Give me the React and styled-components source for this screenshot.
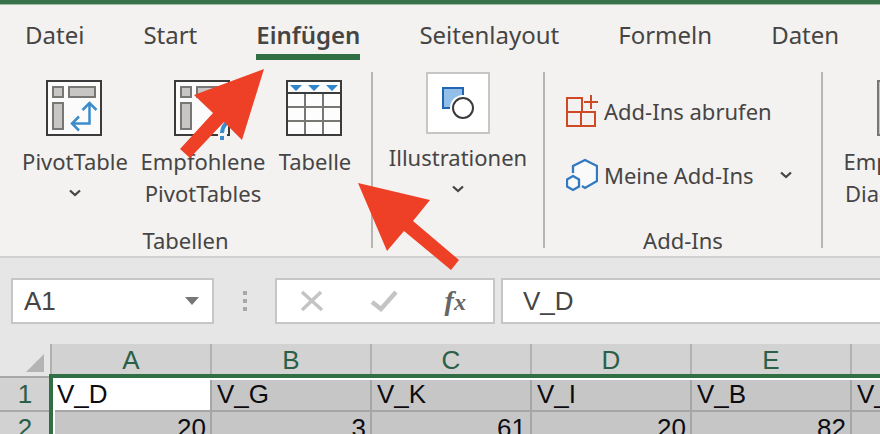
import React from 'react';
import styled, { createGlobalStyle, css } from 'styled-components';

const GlobalStyle = createGlobalStyle`
  * { box-sizing: border-box; }
  body { margin: 0; background: #e6e6e6; }
  button, input { font: inherit; color: inherit; }
`;

const Window = styled.div`
  position: relative;
  display: flex;
  flex-direction: column;
  height: 100vh;
  overflow: hidden;
  background: #e6e6e6;
  color: #464544;
  font-family: "Noto Sans", "Open Sans", sans-serif;
  font-size: 22px;
  line-height: 32px;
`;

const TitleStripe = styled.div`
  flex: none;
  height: 5px;
  background: #38724a;
  border-bottom: 1px solid #9dbba6;
`;

const RibbonArea = styled.header`
  flex: none;
  background: #f3f2f1;
  border-bottom: 2px solid #d2d0ce;
`;

const Tabs = styled.nav`
  display: flex;
  gap: 59px;
  padding: 11px 25px 0;
  font-size: 24px;
`;

const Tab = styled.button`
  flex: none;
  height: 44px;
  padding: 0;
  border: 0;
  border-bottom: 6px solid transparent;
  background: none;
  line-height: 36px;
  white-space: nowrap;
  ${(p) => p.$active && css`
    font-weight: 600;
    border-bottom-color: #2f6f43;
  `}
`;

const Ribbon = styled.div`
  display: flex;
  padding: 12px 0 8px;
`;

const Group = styled.section`
  flex: none;
  display: flex;
  flex-direction: column;
  justify-content: space-between;
  width: ${(p) => p.$width}px;
  height: 176px;
  border-right: 2px solid #b8b6b4;
`;

const GroupTitle = styled.h2`
  margin: 0;
  font-size: 22px;
  font-weight: 400;
  line-height: 16px;
  text-align: center;
`;

const Tools = styled.div`
  display: flex;
  padding: 8px 0 0 ${(p) => p.$inset || 0}px;
`;

const Tool = styled.button`
  flex: none;
  display: flex;
  flex-direction: column;
  align-items: center;
  width: ${(p) => p.$width}px;
  padding: 0;
  border: 0;
  background: none;
  white-space: nowrap;
  svg { flex: none; }
`;

const ToolText = styled.span`
  padding-top: 7px;
`;

const Frame = styled.span`
  display: flex;
  align-items: center;
  justify-content: center;
  width: 64px;
  height: 62px;
  border: 2px solid #c8c6c4;
  background: #fff;
`;

const IllustrationTools = styled(Tools)`
  padding-top: 0;
  justify-content: center;
`;

const AddInList = styled.div`
  display: flex;
  flex-direction: column;
  gap: 30px;
  padding: 22px 0 0 21px;
`;

const AddIn = styled.button`
  display: flex;
  align-items: center;
  gap: 6px;
  padding: 0;
  border: 0;
  background: none;
  white-space: nowrap;
  svg { flex: none; }
`;

const AddInName = styled.span`
  margin-right: 20px;
`;

const FormulaBar = styled.div`
  flex: none;
  display: flex;
  align-items: center;
  height: 86px;
  padding: 0 0 0 11px;
  font-family: "Liberation Sans", Arial, sans-serif;
  font-size: 26px;
`;

const Box = styled.div`
  flex: none;
  display: flex;
  align-items: center;
  height: 46px;
  border: 2px solid #c6c6c6;
  background: #fff;
`;

const NameBox = styled(Box)`
  width: 203px;
  padding: 0 13px 0 11px;
`;

const FormulaBox = styled(Box)`
  flex: 1;
  padding-left: 20px;
  border-right: 0;
`;

const Actions = styled(Box)`
  width: 220px;
  margin-right: 6px;
  padding-right: 4px;
  justify-content: space-around;
`;

const Field = styled.input`
  flex: 1;
  min-width: 0;
  padding: 0;
  border: 0;
  outline: 0;
  background: none;
`;

const IconButton = styled.button`
  display: flex;
  padding: 0;
  border: 0;
  background: none;
`;

const FxButton = styled(IconButton)`
  align-items: baseline;
  color: #666;
  font: italic bold 28px/32px "Liberation Serif", serif;
  small { font-size: 24px; }
`;

const Grip = styled.div`
  flex: none;
  display: flex;
  flex-direction: column;
  align-items: center;
  gap: 4px;
  width: 61px;
`;

const Dot = styled.span`
  width: 4px;
  height: 4px;
  background: #a8a8a8;
`;

const SheetArea = styled.main`
  position: relative;
  flex: 1;
  overflow: hidden;
  font-family: "Liberation Sans", Arial, sans-serif;
  font-size: 26px;
`;

const Sheet = styled.table`
  width: 1012px;
  table-layout: fixed;
  border-collapse: separate;
  border-spacing: 0;
  color: #0c0c10;
`;

const CornerColumn = styled.col`
  width: 52px;
`;

const heading = css`
  padding: 0;
  color: #2b6048;
  font-weight: 400;
  border-right: 2px solid #b1b1b1;
  border-bottom: 2px solid #a8a8a8;
  background: #d2d2d2;
`;

const ColumnHeading = styled.th`
  ${heading}
  height: 34px;
`;

const RowHeading = styled.th`
  ${heading}
  height: 34px;
`;

const Corner = styled.td`
  padding: 0 6px 4px 0;
  border-right: 2px solid #b1b1b1;
  border-bottom: 2px solid #a8a8a8;
  vertical-align: bottom;
  svg { display: block; margin-left: auto; }
`;

const Cell = styled.td`
  height: 34px;
  padding: 0 4px 0 5px;
  line-height: 32px;
  text-align: ${(p) => (p.$number ? 'right' : 'left')};
  border-right: 2px solid #a6a6a6;
  border-bottom: 2px solid #a6a6a6;
  background: ${(p) => (p.$current ? '#fff' : '#c6c6c6')};
`;

const Selection = styled.div`
  position: absolute;
  inset: 30px 0 0 49px;
  border-top: 4px solid #2f6f43;
  border-left: 4px solid #2f6f43;
  box-shadow: inset 2px 2px 0 #fff;
  pointer-events: none;
`;

const Arrow = styled.svg`
  position: absolute;
  left: ${(p) => p.$x}px;
  top: ${(p) => p.$y}px;
  fill: #ee4026;
  pointer-events: none;
`;

const Chevron = ({ pad = 0 }) => (
  <svg width="12" height={8 + pad} viewBox={`0 ${-pad} 12 ${8 + pad}`} fill="none" stroke="#454545" strokeWidth="2.3" aria-hidden="true">
    <path d="M1 1.5 6 6l5-4.5" />
  </svg>
);

const PivotIcon = ({ question }) => (
  <svg width="58" height="58" viewBox="0 0 58 58" fill="none" overflow="visible" aria-hidden="true">
    <path d="M1 1h54v54H1z" fill="#fbfbfb" stroke="#3b3b3b" strokeWidth="2" />
    <g fill="#c8c6c4" stroke="#797774" strokeWidth="2">
      <path d="M7 7h10v10H7zM23 7h26v10H23zM7 23h10v26H7z" />
    </g>
    {question ? (
      <>
        <path d="M44 50h9v10h-9z" fill="#f6f6f5" />
        <path d="M42 37c0-8 13-8 13 0 0 6-7 7-7 16M48 56v4" stroke="#3c8ccb" strokeWidth="4" />
      </>
    ) : (
      <path d="M26 43.500H43.500V23.500M36.500 30l7-7 7 7M33 36.500l-7 7 7 7" stroke="#3c8ccb" strokeWidth="2.500" />
    )}
  </svg>
);

const TableIcon = () => (
  <svg width="58" height="58" viewBox="0 0 58 58" fill="none" aria-hidden="true">
    <path d="M1 1h54v54H1z" fill="#fdfdfd" />
    <path d="M19 14v41M37 14v41M1 27h54M1 41h54" stroke="#797774" strokeWidth="2" />
    <path d="M1 1h54v54H1zM1 13h54" stroke="#3b3b3b" strokeWidth="2" />
    <path d="M4 5h12l-6 6zM22 5h12l-6 6zM40 5h12l-6 6z" fill="#2f86cc" />
  </svg>
);

const ShapesIcon = () => (
  <svg width="34" height="34" viewBox="0 0 34 34" aria-hidden="true">
    <path d="M2 2h20v20H2z" fill="#91bfe9" stroke="#2266b3" strokeWidth="2" />
    <circle cx="22" cy="22" r="13" fill="#fff" />
    <circle cx="22" cy="22" r="10" fill="#fff" stroke="#3b3b3b" strokeWidth="2" />
  </svg>
);

const StoreIcon = () => (
  <svg width="32" height="34" viewBox="0 0 32 34" fill="none" stroke="#cd4a25" strokeWidth="2" aria-hidden="true">
    <path d="M1 4h15v14H1zM1 18h14v14H1zM15 18h14v14H15zM25 1v14M18 8h14" />
  </svg>
);

const HexIcon = () => (
  <svg width="32" height="34" viewBox="0 0 32 34" fill="none" stroke="#3279c2" strokeWidth="2.300" aria-hidden="true">
    <path d="M7 15V8l12-6 12 6v15L19 30l-3-2" fill="#fafafa" />
    <path d="M7 18l6 3.500v7L7 32l-6-3.500v-7z" fill="#fafafa" />
  </svg>
);

const ChartIcon = () => (
  <svg width="58" height="58" viewBox="0 0 58 58" aria-hidden="true">
    <path d="M1 1h54v54H1z" fill="#c8c6c4" stroke="#797774" strokeWidth="2" />
  </svg>
);

const tabs = ['Datei', 'Start', 'Einfügen', 'Seitenlayout', 'Formeln', 'Daten'];
const columns = ['A', 'B', 'C', 'D', 'E', 'F'];
const names = ['V_D', 'V_G', 'V_K', 'V_I', 'V_B', 'V_A'];
const values = [20, 3, 61, 20, 82, ''];

export default function App() {
  return (
    <Window>
      <GlobalStyle />
      <TitleStripe />
      <RibbonArea>
        <Tabs>
          {tabs.map((t) => <Tab key={t} $active={t === 'Einfügen'}>{t}</Tab>)}
        </Tabs>
        <Ribbon>
          <Group $width={373}>
            <Tools $inset={18}>
              <Tool $width={114}>
                <PivotIcon />
                <ToolText>PivotTable</ToolText>
                <Chevron pad={12} />
              </Tool>
              <Tool $width={142}>
                <PivotIcon question />
                <ToolText>Empfohlene<br />PivotTables</ToolText>
              </Tool>
              <Tool $width={82}>
                <TableIcon />
                <ToolText>Tabelle</ToolText>
              </Tool>
            </Tools>
            <GroupTitle>Tabellen</GroupTitle>
          </Group>
          <Group $width={172}>
            <IllustrationTools>
              <Tool $width={150}>
                <Frame><ShapesIcon /></Frame>
                <ToolText>Illustrationen</ToolText>
                <Chevron pad={12} />
              </Tool>
            </IllustrationTools>
          </Group>
          <Group $width={278}>
            <AddInList>
              <AddIn><StoreIcon /><AddInName>Add-Ins abrufen</AddInName></AddIn>
              <AddIn><HexIcon /><AddInName>Meine Add-Ins</AddInName><Chevron /></AddIn>
            </AddInList>
            <GroupTitle>Add-Ins</GroupTitle>
          </Group>
          <Group $width={180}>
            <Tools $inset={12}>
              <Tool $width={142}>
                <ChartIcon />
                <ToolText>Empfohlene<br />Diagramme</ToolText>
              </Tool>
            </Tools>
          </Group>
        </Ribbon>
      </RibbonArea>
      <FormulaBar>
        <NameBox>
          <Field aria-label="Namenfeld" defaultValue="A1" />
          <IconButton aria-label="Namen anzeigen">
            <svg width="14" height="8" viewBox="0 0 14 8"><path d="M0 0h14L7 8z" fill="#777" /></svg>
          </IconButton>
        </NameBox>
        <Grip><Dot /><Dot /><Dot /></Grip>
        <Actions>
          <IconButton aria-label="Abbrechen">
            <svg width="24" height="22" viewBox="0 0 24 22" stroke="#c4c4c4" strokeWidth="3.500"><path d="M2 2l20 18M21 2L2 20" /></svg>
          </IconButton>
          <IconButton aria-label="Eingeben">
            <svg width="28" height="22" viewBox="0 0 28 22" fill="none" stroke="#c4c4c4" strokeWidth="4.500"><path d="M2 12l9 7L26 2" /></svg>
          </IconButton>
          <FxButton aria-label="Funktion einfügen">f<small>x</small></FxButton>
        </Actions>
        <FormulaBox><Field aria-label="Bearbeitungsleiste" defaultValue="V_D" /></FormulaBox>
      </FormulaBar>
      <SheetArea>
        <Sheet>
          <colgroup>
            <CornerColumn />
            {columns.map((c) => <col key={c} />)}
          </colgroup>
          <thead>
            <tr>
              <Corner><svg width="18" height="18" viewBox="0 0 18 18"><path d="M18 0v18H0z" fill="#b4b4b4" /></svg></Corner>
              {columns.map((c) => <ColumnHeading key={c} scope="col">{c}</ColumnHeading>)}
            </tr>
          </thead>
          <tbody>
            <tr>
              <RowHeading scope="row">1</RowHeading>
              {names.map((n, i) => <Cell key={n} $current={i === 0}>{n}</Cell>)}
            </tr>
            <tr>
              <RowHeading scope="row">2</RowHeading>
              {values.map((v, i) => <Cell key={columns[i]} $number>{v}</Cell>)}
            </tr>
          </tbody>
        </Sheet>
        <Selection />
      </SheetArea>
      <Arrow $x={180} $y={69} width="84" height="90" viewBox="0 0 84 90" aria-hidden="true">
        <path d="M84 0 62 71 44 53 10 89 0 80 33 44 14 26z" />
      </Arrow>
      <Arrow $x={358} $y={183} width="102" height="88" viewBox="0 0 102 88" aria-hidden="true">
        <path d="M0 0 72 17 55 38 101 77 93 87 46 48 29 68z" />
      </Arrow>
    </Window>
  );
}
